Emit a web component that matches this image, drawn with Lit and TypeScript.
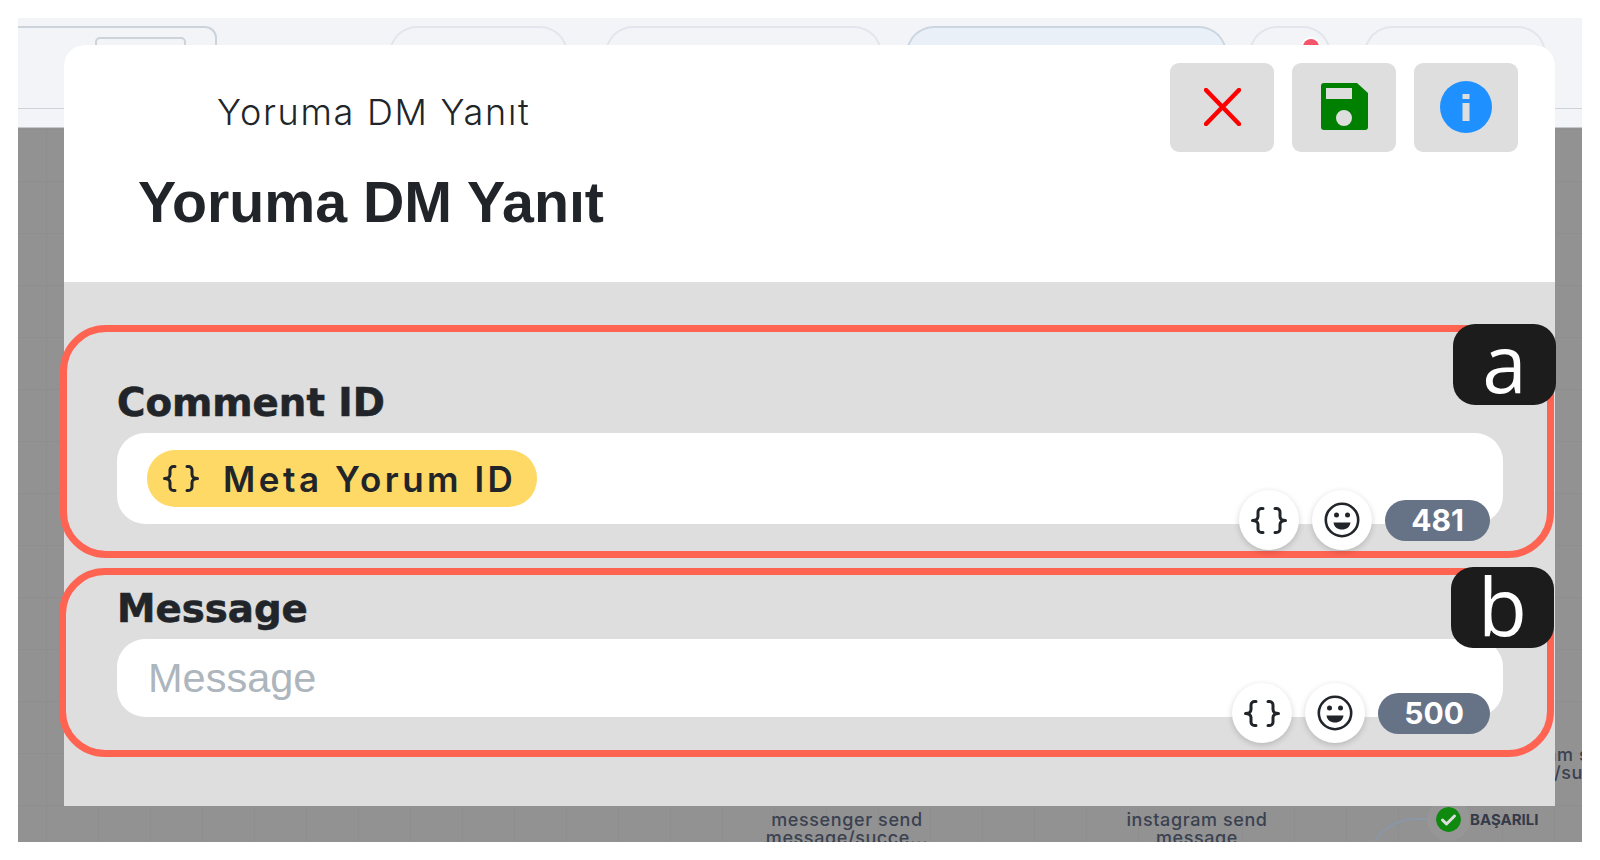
import { LitElement, html, css, svg } from 'lit';
import { customElement, property } from 'lit/decorators.js';

const braces = () => html`
  <svg width="36" height="27" viewBox="0 0 36 27" fill="none"
    stroke="currentColor" stroke-width="3" stroke-linecap="round" stroke-linejoin="round">
    <path d="M12 1.500H10.500A3.500 3.500 0 0 0 7 5v4.500c0 2-1.800 4-5.500 4c3.700 0 5.500 2 5.500 4V22a3.500 3.500 0 0 0 3.500 3.500H12" />
    <path d="M24 1.500h1.500A3.500 3.500 0 0 1 29 5v4.500c0 2 1.800 4 5.500 4c-3.700 0-5.500 2-5.500 4V22a3.500 3.500 0 0 1-3.500 3.500H24" />
  </svg>
`;

const smile = html`
  <svg width="36" height="36" viewBox="0 0 36 36">
    <circle cx="18" cy="18" r="16.200" fill="none" stroke="currentColor" stroke-width="2.600" />
    <circle cx="12.500" cy="13" r="2.500" fill="currentColor" />
    <circle cx="23.500" cy="13" r="2.500" fill="currentColor" />
    <path d="M9.500 20.500h17c-.5 4.500-4 7-8.500 7s-8-2.500-8.500-7z" fill="currentColor" />
  </svg>
`;

@customElement('field-box')
export class FieldBox extends LitElement {
  @property() label = '';
  @property() tag = '';
  @property() placeholder = '';
  @property() chip = '';
  @property({ type: Number }) count = 0;

  static styles = css`
    :host {
      display: block;
      color: #212529;
    }
    .frame {
      position: relative;
      box-sizing: border-box;
      height: 100%;
      border: 7px solid #ff6352;
      border-radius: 46px;
      padding: var(--pad-top) 44px 0 var(--pad-left);
    }
    .label {
      font: 700 38.700px/38px 'DejaVu Sans', sans-serif;
      -webkit-text-stroke: 0.6px currentColor;
      margin-bottom: 11px;
    }
    .input {
      position: relative;
      display: flex;
      align-items: center;
      height: var(--input-h);
      border-radius: 28px;
      background: #fff;
      padding: 0 30px;
    }
    .chip {
      display: flex;
      align-items: center;
      gap: 24px;
      height: 57px;
      margin-top: -1px;
      padding: 0 21px 0 16px;
      border-radius: 28px;
      background: #ffd966;
      font: 600 35px/1 Inter, sans-serif;
      letter-spacing: 3.500px;
    }
    .chip span {
      padding-top: 2px;
    }
    .placeholder {
      font: 400 41.500px/1 'Liberation Sans', sans-serif;
      color: #adb5bd;
      padding-left: 1px;
    }
    .tools {
      position: absolute;
      right: 13px;
      bottom: -26px;
      display: flex;
      align-items: center;
      gap: 13px;
    }
    .round {
      width: 60px;
      height: 60px;
      border-radius: 50%;
      background: #fff;
      box-shadow: 0 2px 6px rgba(0, 0, 0, 0.18);
      display: flex;
      align-items: center;
      justify-content: center;
    }
    .count {
      height: 41px;
      padding: 0 26px;
      border-radius: 21px;
      background: #667386;
      color: #fff;
      font: 700 30px/41px Inter, sans-serif;
    }
    .tag {
      position: absolute;
      top: -8px;
      right: var(--tag-right);
      width: 103px;
      height: 81px;
      border-radius: 22px;
      background: #1c1c1c;
      color: #fff;
      display: flex;
      align-items: center;
      justify-content: center;
      font: 500 80px/1 'Open Sans', sans-serif;
      padding-bottom: 6px;
      box-sizing: border-box;
    }
  `;

  render() {
    return html`
      <div class="frame">
        <div class="label">${this.label}</div>
        <div class="input">
          ${this.chip
            ? html`<div class="chip">${braces()}<span>${this.chip}</span></div>`
            : html`<div class="placeholder">${this.placeholder}</div>`}
          <div class="tools">
            <div class="round">${braces()}</div>
            <div class="round">${smile}</div>
            <div class="count">${this.count}</div>
          </div>
        </div>
        <div class="tag">${this.tag}</div>
      </div>
    `;
  }
}

const tabs = [
  { gap: 172, width: 179, dot: 'flag', bg: 'transparent', flagAt: 100 },
  { gap: 37, width: 277, dot: '', bg: 'transparent', flagAt: 0 },
  { gap: 24, width: 321, dot: '', bg: '#eaf0f8', flagAt: 0 },
  { gap: 22, width: 82, dot: 'dot', bg: 'transparent', flagAt: 0 },
  { gap: 33, width: 182, dot: 'flag', bg: 'transparent', flagAt: 101 },
];

@customElement('app-root')
export class AppRoot extends LitElement {
  static styles = css`
    :host {
      display: block;
      background: #fff;
      padding: 18px;
      height: 860px;
      box-sizing: border-box;
      font-family: Inter, sans-serif;
    }
    .screen {
      position: relative;
      width: 1564px;
      height: 824px;
      overflow: hidden;
      display: flex;
      flex-direction: column;
    }
    .topbar {
      height: 110px;
      flex: none;
      box-sizing: border-box;
      background: #f3f4f8;
      border-bottom: 1px solid #c3c8ce;
      display: flex;
      align-items: flex-start;
      padding-top: 8px;
      position: relative;
    }
    .topbar::after {
      content: '';
      position: absolute;
      left: 0;
      right: 0;
      top: 90px;
      height: 1px;
      background: #ccd3da;
    }
    .panel {
      width: 199px;
      height: 60px;
      box-sizing: border-box;
      flex: none;
      border: 2px solid #ccd3da;
      border-left: 0;
      border-bottom: 0;
      border-top-right-radius: 12px;
      padding: 9px 0 0 77px;
    }
    .panel div {
      width: 91px;
      height: 30px;
      box-sizing: border-box;
      border: 2px solid #ccd3da;
      border-radius: 5px;
    }
    .tab {
      position: relative;
      height: 60px;
      box-sizing: border-box;
      flex: none;
      border: 2px solid #e2e5ec;
      border-bottom: 0;
      border-radius: 28px 28px 0 0;
    }
    .tab.active {
      border-color: #ccd6e0;
    }
    .flag {
      position: absolute;
      top: 17px;
      width: 36px;
      height: 20px;
      background: #f47c7c;
    }
    .dot {
      position: absolute;
      top: 11px;
      left: 52px;
      width: 16px;
      height: 16px;
      border-radius: 50%;
      background: #f5556b;
      box-shadow: 0 0 0 2px #fff;
    }
    .canvas {
      position: relative;
      flex: 1;
      background-color: #929292;
      background-image: linear-gradient(#8e8e8e 1px, transparent 1px),
        linear-gradient(90deg, #8e8e8e 1px, transparent 1px);
      background-size: 52px 52px;
      background-position: 28px 1px;
    }
    .node {
      position: absolute;
      width: 220px;
      text-align: center;
      font: 500 18px/18px Inter, sans-serif;
      letter-spacing: 0.6px;
      color: #3a4150;
    }
    .status {
      position: absolute;
      left: 1418px;
      top: 666px;
      height: 50px;
      display: flex;
      align-items: center;
      gap: 9px;
      font: 700 15px/1 Inter, sans-serif;
      color: #343a48;
    }
    .check {
      display: block;
      border-radius: 50%;
      box-shadow: 0 0 0 9px #969696;
    }
    .link {
      position: absolute;
      left: 1355px;
      top: 689px;
    }
    .modal {
      position: absolute;
      left: 46px;
      top: 27px;
      width: 1491px;
      height: 761px;
      display: flex;
      flex-direction: column;
      border-radius: 20px 20px 0 0;
      background: #dedede;
    }
    .head {
      height: 237px;
      flex: none;
      box-sizing: border-box;
      background: #fff;
      border-radius: 20px 20px 0 0;
      padding: 18px 37px 0 74px;
      display: flex;
      justify-content: space-between;
      color: #212529;
    }
    .sub {
      font: 300 36px/1 Inter, sans-serif;
      letter-spacing: 1.700px;
      margin: 31px 0 0 79px;
    }
    h1 {
      margin: 44px 0 0;
      font: 700 57.300px/1 'Liberation Sans', sans-serif;
    }
    .actions {
      display: flex;
      gap: 18px;
    }
    .action {
      width: 104px;
      height: 89px;
      box-sizing: border-box;
      padding-bottom: 2px;
      border-radius: 9px;
      background: #dedede;
      display: flex;
      align-items: center;
      justify-content: center;
    }
    .body {
      flex: 1;
      padding: 43px 1px 0 0;
      display: flex;
      flex-direction: column;
      gap: 10px;
      margin-left: -4px;
    }
    .first {
      height: 233px;
      --pad-top: 52px;
      --pad-left: 50px;
      --input-h: 91px;
      --tag-right: -9px;
    }
    .second {
      height: 189px;
      margin-left: -1px;
      --pad-top: 15px;
      --pad-left: 51px;
      --input-h: 78px;
      --tag-right: -7px;
    }
  `;

  render() {
    return html`
      <div class="screen">
        <div class="topbar">
          <div class="panel"><div></div></div>
          ${tabs.map(
            (t) => html`
              <div
                class="tab ${t.bg !== 'transparent' ? 'active' : ''}"
                style="margin-left:${t.gap}px;width:${t.width}px;background:${t.bg}"
              >
                ${t.dot === 'flag' ? html`<div class="flag" style="left:${t.flagAt}px"></div>` : ''}
                ${t.dot === 'dot' ? html`<div class="dot"></div>` : ''}
              </div>
            `
          )}
        </div>
        <div class="canvas">
          <div class="node" style="left:719px;top:683px">messenger send<br />message/succe...</div>
          <div class="node" style="left:1069px;top:683px">instagram send<br />message</div>
          <div class="node" style="left:1425px;top:618px">instagram send<br />message/succe...</div>
          <svg class="link" width="60" height="30" viewBox="0 0 60 30" fill="none">
            <path d="M54 2H44C24 2 8 12 2 25" stroke="#8a97a8" stroke-width="2" />
          </svg>
          <div class="status">
            <svg class="check" width="25" height="25" viewBox="0 0 25 25">
              ${svg`<circle cx="12.500" cy="12.500" r="12.500" fill="#0f8a0f" />
              <path d="M6.500 13l4 4 8-8" fill="none" stroke="#dedede" stroke-width="3" stroke-linecap="round" stroke-linejoin="round" />`}
            </svg>
            BAŞARILI
          </div>
        </div>

        <div class="modal">
          <div class="head">
            <div>
              <div class="sub">Yoruma DM Yanıt</div>
              <h1>Yoruma DM Yanıt</h1>
            </div>
            <div class="actions">
              <div class="action">
                <svg width="37" height="38" viewBox="0 0 37 38">
                  <path d="M2 2l33 34M35 2L2 36" stroke="#f00" stroke-width="4.500" stroke-linecap="round" />
                </svg>
              </div>
              <div class="action">
                <svg width="47" height="47" viewBox="0 0 47 47">
                  <path
                    fill="#008000"
                    fill-rule="evenodd"
                    d="M3 0h33l11 10v34a3 3 0 0 1-3 3H3a3 3 0 0 1-3-3V3a3 3 0 0 1 3-3zM5 5v11h26V5zM23 27a8 8 0 1 0 0 16a8 8 0 0 0 0-16z"
                  />
                </svg>
              </div>
              <div class="action">
                <svg width="52" height="52" viewBox="0 0 52 52">
                  <circle cx="26" cy="26" r="26" fill="#1e90ff" />
                  <rect x="22.500" y="13" width="7" height="5" fill="#dedede" />
                  <rect x="22.500" y="22" width="7" height="18" fill="#dedede" />
                </svg>
              </div>
            </div>
          </div>
          <div class="body">
            <field-box class="first" label="Comment ID" tag="a" chip="Meta Yorum ID" count="481"></field-box>
            <field-box class="second" label="Message" tag="b" placeholder="Message" count="500"></field-box>
          </div>
        </div>
      </div>
    `;
  }
}
